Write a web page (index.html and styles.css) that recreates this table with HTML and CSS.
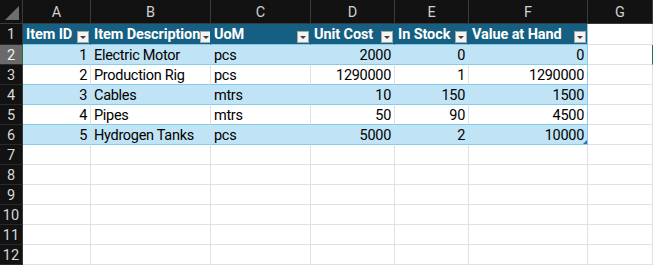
FILE: index.html
```html
<!DOCTYPE html>
<html>
<head>
<meta charset="utf-8">
<link rel="stylesheet" href="styles.css">
</head>
<body>
<div class="sheet">
  <div class="ch corner"><span class="tri"></span></div>
  <div class="ch">A</div><div class="ch">B</div><div class="ch">C</div><div class="ch">D</div><div class="ch">E</div><div class="ch">F</div><div class="ch">G</div>

  <div class="rh first">1</div>
  <div class="c hd first"><span>Item ID</span><span class="fb"></span></div>
  <div class="c hd first"><span>Item Description</span><span class="fb"></span></div>
  <div class="c hd first"><span>UoM</span><span class="fb"></span></div>
  <div class="c hd first"><span>Unit Cost</span><span class="fb"></span></div>
  <div class="c hd first"><span>In Stock</span><span class="fb"></span></div>
  <div class="c hd first last"><span>Value at Hand</span><span class="fb"></span></div>
  <div class="c first"></div>

  <div class="rh sel">2</div>
  <div class="c t band num">1</div><div class="c t band">Electric Motor</div><div class="c t band">pcs</div><div class="c t band num">2000</div><div class="c t band num">0</div><div class="c t band num last">0</div><div class="c active"></div>

  <div class="rh">3</div>
  <div class="c t num">2</div><div class="c t">Production Rig</div><div class="c t">pcs</div><div class="c t num">1290000</div><div class="c t num">1</div><div class="c t num last">1290000</div><div class="c"></div>

  <div class="rh">4</div>
  <div class="c t band num">3</div><div class="c t band">Cables</div><div class="c t band">mtrs</div><div class="c t band num">10</div><div class="c t band num">150</div><div class="c t band num last">1500</div><div class="c"></div>

  <div class="rh">5</div>
  <div class="c t num">4</div><div class="c t">Pipes</div><div class="c t">mtrs</div><div class="c t num">50</div><div class="c t num">90</div><div class="c t num last">4500</div><div class="c"></div>

  <div class="rh">6</div>
  <div class="c t band num">5</div><div class="c t band">Hydrogen Tanks</div><div class="c t band">pcs</div><div class="c t band num">5000</div><div class="c t band num">2</div><div class="c t band num last end">10000<span class="handle"></span></div><div class="c"></div>

  <div class="rh">7</div><div class="c"></div><div class="c"></div><div class="c"></div><div class="c"></div><div class="c"></div><div class="c"></div><div class="c"></div>
  <div class="rh">8</div><div class="c"></div><div class="c"></div><div class="c"></div><div class="c"></div><div class="c"></div><div class="c"></div><div class="c"></div>
  <div class="rh">9</div><div class="c"></div><div class="c"></div><div class="c"></div><div class="c"></div><div class="c"></div><div class="c"></div><div class="c"></div>
  <div class="rh">10</div><div class="c"></div><div class="c"></div><div class="c"></div><div class="c"></div><div class="c"></div><div class="c"></div><div class="c"></div>
  <div class="rh">11</div><div class="c"></div><div class="c"></div><div class="c"></div><div class="c"></div><div class="c"></div><div class="c"></div><div class="c"></div>
  <div class="rh">12</div><div class="c"></div><div class="c"></div><div class="c"></div><div class="c"></div><div class="c"></div><div class="c"></div><div class="c"></div>
</div>
</body>
</html>
```

FILE: styles.css
```css
html, body {
  margin: 0;
  padding: 0;
  background: #ffffff;
  overflow: hidden;
}

.sheet {
  display: grid;
  grid-template-columns: 23px 68px 120px 100px 84px 74px 119px 65px;
  grid-template-rows: 24px 21px;
  grid-auto-rows: 20px;
  font-family: Roboto, "Liberation Sans", sans-serif;
  font-size: 14.5px;
  color: #000;
  width: 653px;
}

.sheet > div {
  box-sizing: border-box;
  white-space: nowrap;
  overflow: hidden;
}

.ch {
  background: #121212;
  color: #cfcfcf;
  border-right: 1px solid #3a3a3a;
  border-bottom: 1px solid #3a3a3a;
  display: flex;
  align-items: center;
  justify-content: center;
  padding-top: 2px;
  font-size: 14.5px;
}

.corner {
  position: relative;
}

.corner .tri {
  position: absolute;
  right: 3px;
  bottom: 3px;
  width: 0;
  height: 0;
  border-left: 14px solid transparent;
  border-bottom: 14px solid #6e6e6e;
}

.rh {
  background: #121212;
  color: #d8d8d8;
  border-right: 1px solid #3a3a3a;
  border-bottom: 1px solid #2a2a2a;
  display: flex;
  align-items: center;
  justify-content: center;
  font-size: 14.5px;
  padding-top: 1px;
}

.rh.sel {
  background: #6a6a6a;
  color: #f0f0f0;
  border-right: 1px solid #1e7145;
}

.c {
  border-right: 1px solid #e1e1e1;
  border-bottom: 1px solid #e1e1e1;
  padding: 0 3px;
  display: flex;
  align-items: center;
  padding-top: 2px;
  letter-spacing: -0.3px;
}

.c.num {
  justify-content: flex-end;
}

.c.t {
  border-bottom-color: #83cbeb;
}

.c.band {
  background: #c0e4f5;
  border-right-color: #c0e4f5;
}

.c.last {
  border-right-color: #83cbeb;
}

.c.hd {
  background: #156082;
  border-right-color: #156082;
  border-bottom-color: #83cbeb;
  color: #ffffff;
  font-weight: 700;
  letter-spacing: -0.1px;
  justify-content: space-between;
  padding: 1px 1px 0 3px;
  align-items: center;
}

.c.hd.last {
  border-right-color: #83cbeb;
}

.fb {
  flex: none;
  width: 12px;
  height: 12px;
  box-sizing: border-box;
  background: #f4f4f4;
  border: 1px solid #a8a8a8;
  margin-top: 5px;
  display: flex;
  align-items: center;
  justify-content: center;
}

.fb::after {
  content: "";
  width: 0;
  height: 0;
  border-left: 3px solid transparent;
  border-right: 3px solid transparent;
  border-top: 3px solid #404040;
  margin-top: 1px;
}

.c.active {
  border-right-color: #1e7145;
}

.c.end {
  position: relative;
}

.handle {
  position: absolute;
  right: 0;
  bottom: 0;
  width: 0;
  height: 0;
  border-left: 4px solid transparent;
  border-bottom: 4px solid #2f6fb3;
}
```
